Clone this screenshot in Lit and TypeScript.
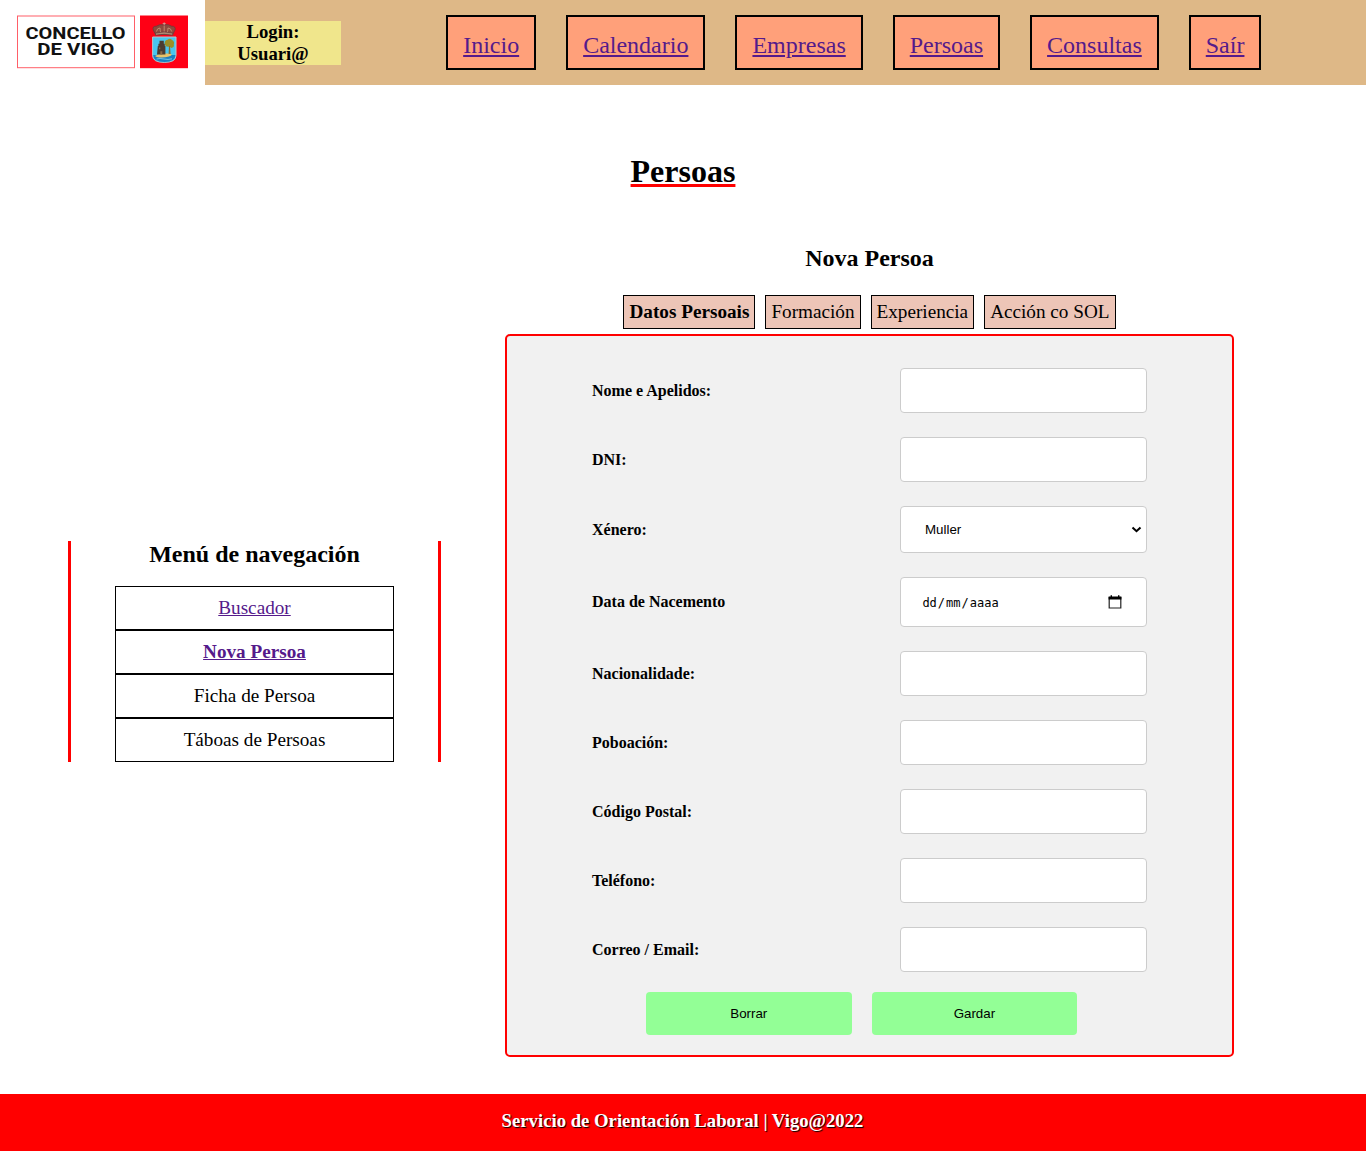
import { LitElement, html, css, svg } from "lit";
import { customElement } from "lit/decorators.js";

const NAV = ["Inicio", "Calendario", "Empresas", "Persoas", "Consultas", "Saír"];
const TABS = ["Datos Persoais", "Formación", "Experiencia", "Acción co SOL"];
const FIELDS: { label: string; kind: "text" | "select" | "date" }[] = [
  { label: "Nome e Apelidos:", kind: "text" },
  { label: "DNI:", kind: "text" },
  { label: "Xénero:", kind: "select" },
  { label: "Data de Nacemento", kind: "date" },
  { label: "Nacionalidade:", kind: "text" },
  { label: "Poboación:", kind: "text" },
  { label: "Código Postal:", kind: "text" },
  { label: "Teléfono:", kind: "text" },
  { label: "Correo / Email:", kind: "text" },
];

const crest = svg`
  <rect x="140" y="15.5" width="48" height="52.7" fill="#ff0015" />
  <g stroke="#6b3a3a" stroke-width="0.8">
    <path d="M155.5 34.5 L153.3 30 Q152 26 156.5 26.2 Q159 24 164 24.8 Q169 24 171.5 26.2 Q176 26 175 30 L172.7 34.5 Z" fill="#8d4a3e" />
    <path d="M156.5 31.5 Q157 28 160 28 Q160 31 161 33 M171.7 31.5 Q171 28 168 28 Q168 31 167 33 M164.2 26 V33" fill="none" stroke="#c79a79" />
    <path d="M155.5 33 Q164 30.8 172.7 33 V35.3 Q164 33.3 155.5 35.3 Z" fill="#b08a72" />
    <path d="M164.2 22.4 V25.4 M162.7 23.6 H165.7" stroke="#c9b0a0" fill="none" />
  </g>
  <path d="M152.6 37 H176 V55.5 Q176 62.4 164.3 62.4 Q152.6 62.4 152.6 55.5 Z" fill="#49c5ee" stroke="#b3c6cc" stroke-width="1" />
  <path d="M153.2 55 H175.4 Q175.4 61.9 164.3 61.9 Q153.2 61.9 153.2 55 Z" fill="#1c7fc0" />
  <path d="M155 56 Q159 53 165 53.5 Q171 53 172 54.8 Q169 57.5 162 57.5 Q157 57.5 155 56 Z" fill="#e8c36a" />
  <path d="M157 54.6 L157.8 46 H158.4 V43.8 H159.5 V40.8 H163.8 V43.8 H164.8 V46 H165.4 V54.6 Z" fill="#4b3c31" />
  <path d="M160.3 54.6 V51.2 H162.3 V54.6 Z M159 47.5 h1.3 v1.8 h-1.3 Z" fill="#8a6a48" />
  <path d="M164.8 44.5 Q164 40.5 167.5 39.8 Q170 37.8 172 40 Q175 41.5 173.8 44.5 Q174.5 47.5 171.3 48 L169.4 46.5 Q166 47.5 164.8 44.5 Z" fill="#9a8f28" />
  <path d="M169 46 L168.6 54 H170.6 L170 46 Z" fill="#8b6b2c" />
  <path d="M156.5 59 Q160 58 164 59 T172 58.8" fill="none" stroke="#8ed3ec" stroke-width="0.8" />
`;

@customElement("app-root")
export class AppRoot extends LitElement {
  static styles = css`
    :host {
      display: flex;
      flex-direction: column;
      min-height: 1151px;
      background: #fff;
      color: #000;
      font-family: "Liberation Serif", "Times New Roman", serif;
      font-size: 16px;
    }
    * { box-sizing: border-box; }
    h1, h2, h3, ul { margin: 0; padding: 0; }
    ul { list-style: none; }
    a { color: #551a8b; text-decoration: underline; }

    .header { display: flex; align-items: center; height: 85px; background: burlywood; }
    .logo { display: block; width: 205px; height: 85px; background: #fff; }
    .logo-text { font-family: Roboto, sans-serif; font-weight: 700; font-size: 16px; fill: #111; }
    .login {
      width: 136px;
      padding: 0 30px;
      background: khaki;
      font-size: 18.72px;
      line-height: 22px;
      text-align: center;
    }
    .nav { flex: 1; display: flex; justify-content: center; gap: 30px; padding-left: 0.6px; }
    .nav-item {
      height: 55px;
      padding: 14px 15px 0;
      border: 2px solid #000;
      background: lightsalmon;
      font-size: 24px;
      line-height: 28px;
    }

    .title {
      align-self: center;
      margin-top: 68px;
      font-size: 32px;
      line-height: 36px;
      text-decoration: underline red 3px;
    }
    .content { display: flex; align-items: center; gap: 64px; margin-top: 56px; padding-left: 68px; }
    .side {
      width: 373px;
      height: 221px;
      padding: 0 44px;
      border: solid red;
      border-width: 0 3px;
      text-align: center;
    }
    .subtitle { font-size: 24px; line-height: 27px; text-align: center; }
    .menu { margin-top: 18px; }
    .menu-item {
      height: 44px;
      border: 1px solid #000;
      font-size: 19.2px;
      line-height: 42px;
    }
    .active { font-weight: 700; }

    .panel { width: 729px; }
    .tabs { display: flex; justify-content: center; gap: 10px; margin: 23px 0 5px; }
    .tab {
      height: 34px;
      padding: 5px;
      border: 1px solid #000;
      background: #edc5b7;
      font-size: 19.2px;
      line-height: 22px;
    }
    .form {
      height: 723px;
      padding: 32px 85px 0;
      border: 2px solid red;
      border-radius: 5px;
      background: #f1f1f1;
    }
    .fields { display: grid; gap: 24px; }
    .row { display: flex; align-items: center; justify-content: space-between; }
    .label { font-weight: 700; font-size: 16px; line-height: 18px; }
    .control {
      display: flex;
      align-items: center;
      justify-content: space-between;
      width: 247px;
      height: 45px;
      border: 1px solid #ccc;
      border-radius: 4px;
      background: #fff;
    }
    .select {
      height: 47px;
      padding: 0 4px 0 24px;
      font: 13.33px "Liberation Sans", Arial, sans-serif;
    }
    .date {
      height: 50px;
      padding: 0 24px 0 20.4px;
      font: 12px "DejaVu Sans Mono", monospace;
    }
    .date-text { padding-top: 1px; }
    .date-part { padding: 0 1px; }
    .buttons { display: flex; gap: 20px; margin: 20px 0 0 54px; }
    .button {
      width: 205.6px;
      height: 43px;
      border: 0;
      border-radius: 4px;
      background: #93ff96;
      color: #000;
      font: 13.33px "Liberation Sans", Arial, sans-serif;
    }

    .footer {
      margin-top: auto;
      height: 57px;
      padding: 16px 1px 0 0;
      background: red;
      color: #fff;
      text-align: center;
      text-shadow: 1px 1px 1px #000;
    }
    .footer-text { font-size: 18.72px; line-height: 21px; }
  `;

  private control(kind: string) {
    if (kind === "select") {
      return html`<div class="control select" role="combobox">
        <span>Muller</span>
        <svg width="11" height="8" viewBox="0 0 11 8">
          <path d="M1.5 1.4 L5.5 5.2 L9.5 1.4" fill="none" stroke="#000" stroke-width="2" />
        </svg>
      </div>`;
    }
    if (kind === "date") {
      return html`<div class="control date">
        <span class="date-text"><span class="date-part">dd</span>/<span class="date-part">mm</span>/<span class="date-part">aaaa</span></span>
        <svg width="14" height="15" viewBox="0 0 14 15">
          <path d="M1.2 2.5 H12.8 V13 H1.2 Z" fill="none" stroke="#222" stroke-width="1.2" />
          <path d="M0.6 1.4 H13.4 V4.4 H0.6 Z M2.6 0.2 H4 V2 H2.6 Z M10 0.2 H11.4 V2 H10 Z" fill="#000" />
        </svg>
      </div>`;
    }
    return html`<div class="control" role="textbox"></div>`;
  }

  render() {
    return html`
      <header class="header">
        <svg class="logo" viewBox="0 0 205 85">
          <rect x="17.5" y="16" width="117" height="51.7" fill="#fff" stroke="#ff5f68" stroke-width="1" />
          <text class="logo-text" x="25.5" y="38.9" textLength="100" lengthAdjust="spacingAndGlyphs">CONCELLO</text>
          <text class="logo-text" x="37.3" y="55.4" textLength="77" lengthAdjust="spacingAndGlyphs">DE VIGO</text>
          ${crest}
        </svg>
        <h3 class="login">Login: Usuari@</h3>
        <nav class="nav">
          ${NAV.map((n) => html`<div class="nav-item"><a href="#">${n}</a></div>`)}
        </nav>
      </header>
      <h1 class="title">Persoas</h1>
      <main class="content">
        <aside class="side">
          <h2 class="subtitle">Menú de navegación</h2>
          <ul class="menu">
            <li class="menu-item"><a href="#">Buscador</a></li>
            <li class="menu-item active"><a href="#">Nova Persoa</a></li>
            <li class="menu-item">Ficha de Persoa</li>
            <li class="menu-item">Táboas de Persoas</li>
          </ul>
        </aside>
        <section class="panel">
          <h2 class="subtitle">Nova Persoa</h2>
          <div class="tabs">
            ${TABS.map((t, i) => html`<div class="tab ${i === 0 ? "active" : ""}">${t}</div>`)}
          </div>
          <div class="form">
            <div class="fields">
              ${FIELDS.map((f) => html`<div class="row"><span class="label">${f.label}</span>${this.control(f.kind)}</div>`)}
            </div>
            <div class="buttons">
              <button class="button">Borrar</button>
              <button class="button">Gardar</button>
            </div>
          </div>
        </section>
      </main>
      <footer class="footer"><h3 class="footer-text">Servicio de Orientación Laboral | Vigo@2022</h3></footer>
    `;
  }
}
